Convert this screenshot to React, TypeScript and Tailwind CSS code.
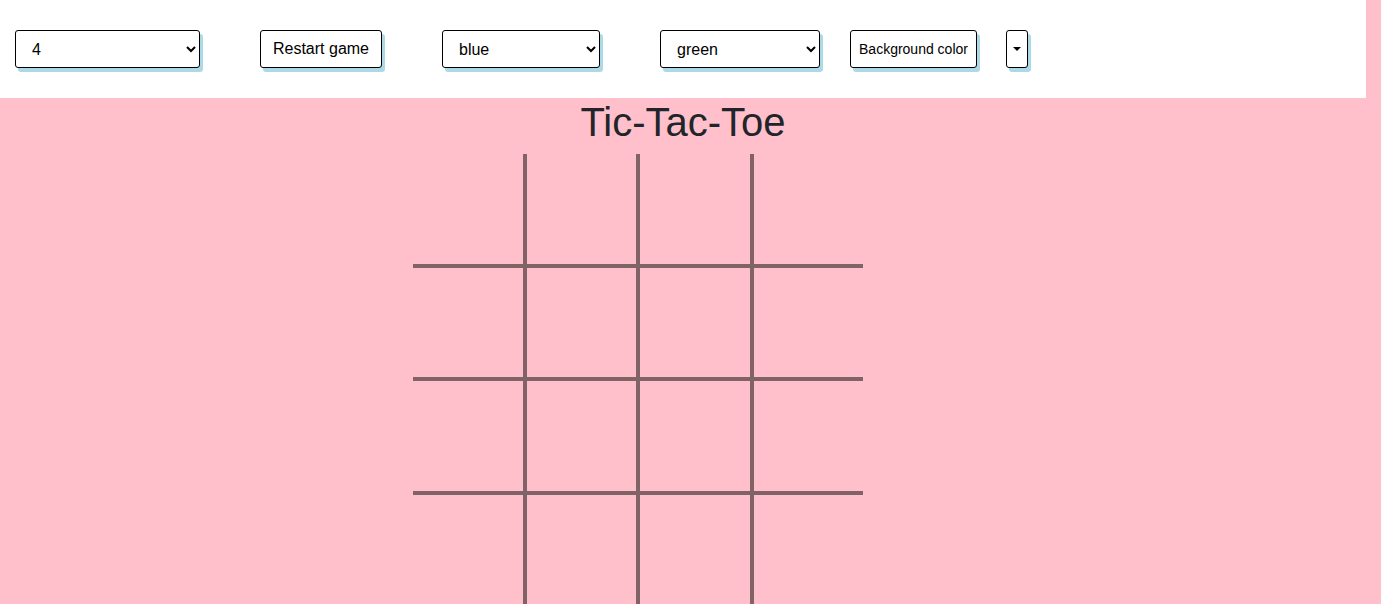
import { useState } from "react";

const shadow = "shadow-[3px_4px_0_0_#add8e6]";

const Board = ({ size }: { size: number }) => {
  const cells = Array.from({ length: size * size }, (_, i) => i);
  return (
    <div className="ml-[413px] mt-2 grid w-[450px] grid-cols-[110px_113px_114px_113px] grid-rows-[110px_113px_114px_113px]">
      {cells.map((i) => {
        const row = Math.floor(i / size);
        const col = i % size;
        return (
          <div
            key={i}
            className={`border-[#806367] ${col > 0 ? "border-l-4" : ""} ${
              row > 0 ? "border-t-4" : ""
            }`}
          />
        );
      })}
    </div>
  );
};

const App = () => {
  const [size, setSize] = useState("4");
  const [player1, setPlayer1] = useState("blue");
  const [player2, setPlayer2] = useState("green");

  return (
    <div className="min-h-[604px] bg-[#ffc0cb] font-['Liberation_Sans',Arial,sans-serif] text-black">
      <div className="flex h-[98px] w-[1366px] items-start bg-white pl-[15px] pt-[30px]">
        <select
          value={size}
          onChange={(e) => setSize(e.target.value)}
          className={`h-[38px] w-[185px] rounded-[3px] border border-black bg-white pl-3 pr-1 text-[16px] ${shadow}`}
        >
          <option value="3">3</option>
          <option value="4">4</option>
          <option value="5">5</option>
        </select>
        <button
          className={`ml-[60px] h-[38px] w-[122px] rounded-[3px] border border-black bg-white text-[16px] ${shadow}`}
        >
          Restart game
        </button>
        <select
          value={player1}
          onChange={(e) => setPlayer1(e.target.value)}
          className={`ml-[60px] h-[38px] w-[158px] rounded-[3px] border border-black bg-white pl-3 pr-1 text-[16px] ${shadow}`}
        >
          <option value="blue">blue</option>
          <option value="red">red</option>
        </select>
        <select
          value={player2}
          onChange={(e) => setPlayer2(e.target.value)}
          className={`ml-[60px] h-[38px] w-[160px] rounded-[3px] border border-black bg-white pl-3 pr-1 text-[16px] ${shadow}`}
        >
          <option value="green">green</option>
          <option value="yellow">yellow</option>
        </select>
        <button
          className={`ml-[30px] h-[38px] w-[127px] rounded-[3px] border border-black bg-white text-[14px] ${shadow}`}
        >
          Background color
        </button>
        <button
          className={`ml-[29px] flex h-[38px] w-[22px] items-center justify-center rounded-[3px] border border-black bg-white ${shadow}`}
        >
          <span className="h-0 w-0 border-x-[4px] border-t-[4px] border-x-transparent border-t-black" />
        </button>
      </div>
      <h1 className="w-[1366px] text-center text-[40px] leading-[48px] text-[#212529]">
        Tic-Tac-Toe
      </h1>
      <Board size={4} />
    </div>
  );
};

export default App;
